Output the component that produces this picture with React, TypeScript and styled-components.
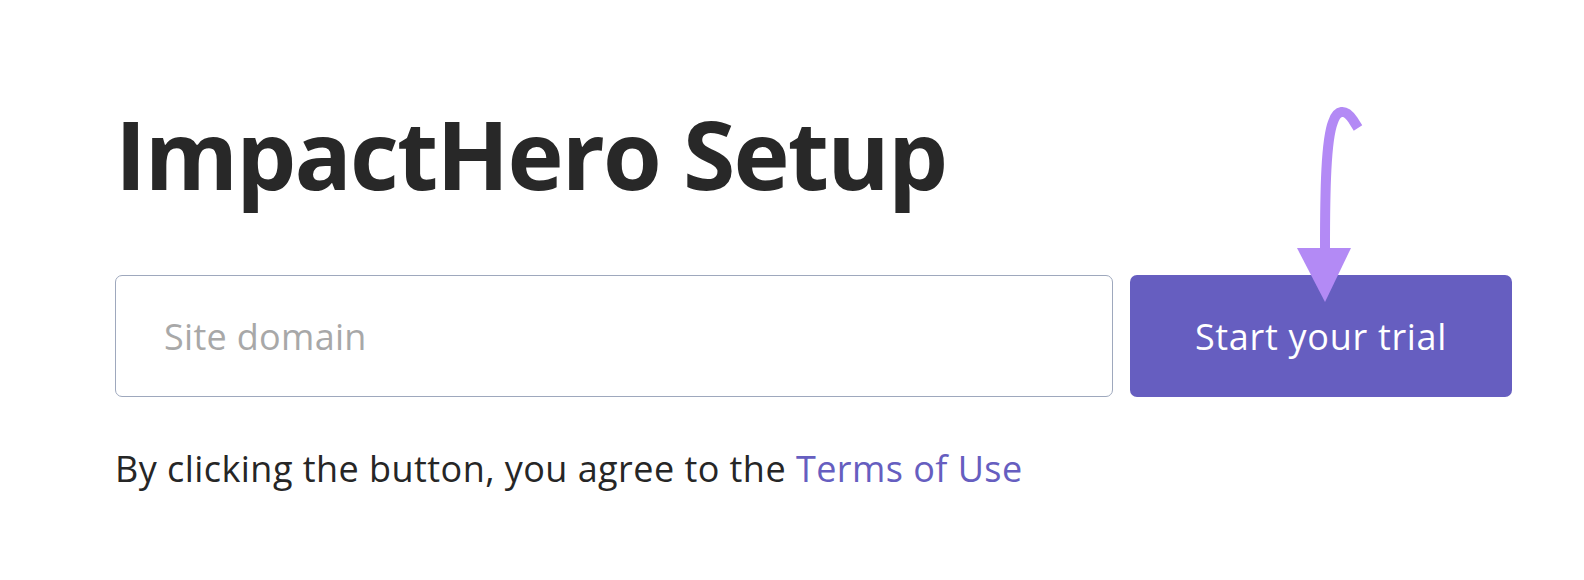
import React from "react";
import styled, { createGlobalStyle } from "styled-components";

const GlobalStyle = createGlobalStyle`
  html, body {
    margin: 0;
    padding: 0;
    background: #ffffff;
  }
  body {
    font-family: "Open Sans", "Noto Sans", sans-serif;
    color: #262626;
  }
`;

const Page = styled.main`
  width: 1584px;
  height: 580px;
  box-sizing: border-box;
  padding: 95px 0 0 115px;
  display: flex;
  flex-direction: column;
  overflow: hidden;
`;

const Title = styled.h1`
  margin: 0;
  font-family: "Open Sans", sans-serif;
  font-weight: 700;
  font-size: 95px;
  line-height: 116px;
  letter-spacing: -1.8px;
  color: #282828;
`;

const Form = styled.form`
  margin-top: 64px;
  display: flex;
  gap: 17px;
  position: relative;
`;

const DomainInput = styled.input`
  box-sizing: border-box;
  width: 998px;
  height: 122px;
  border: 1.5px solid #9ea8bd;
  border-radius: 7px;
  padding: 0 0 0 48px;
  font-family: "Open Sans", sans-serif;
  font-size: 36px;
  letter-spacing: 0.3px;
  color: #262626;
  outline: none;
  &::placeholder {
    color: #a8a8a8;
  }
`;

const TrialButton = styled.button`
  box-sizing: border-box;
  width: 382px;
  height: 122px;
  border: none;
  border-radius: 7px;
  background: #665ec0;
  color: #ffffff;
  font-family: "Open Sans", sans-serif;
  font-size: 36px;
  letter-spacing: 0.7px;
  cursor: pointer;
`;

const Arrow = styled.svg`
  position: absolute;
  left: 1170px;
  top: -175px;
  overflow: visible;
  pointer-events: none;
`;

const Agreement = styled.p`
  margin: 49px 0 0 0;
  font-family: "Open Sans", sans-serif;
  font-size: 36px;
  line-height: 46px;
  letter-spacing: 0.45px;
  color: #262626;
`;

const TermsLink = styled.a`
  color: #665ec0;
  text-decoration: none;
`;

export default function App() {
  return (
    <>
      <GlobalStyle />
      <Page>
        <Title>ImpactHero Setup</Title>
        <Form onSubmit={(e) => e.preventDefault()}>
          <DomainInput placeholder="Site domain" />
          <TrialButton type="submit">Start your trial</TrialButton>
          <Arrow width="80" height="200" viewBox="0 0 80 200">
            <path
              d="M40 148 C40 90 41 40 48 22 C52 10 60 8 68 20 L73 28"
              fill="none"
              stroke="#b38af5"
              strokeWidth="10"
            />
            <polygon points="12,148 66,148 40,202" fill="#b38af5" />
          </Arrow>
        </Form>
        <Agreement>
          By clicking the button, you agree to the <TermsLink href="#">Terms of Use</TermsLink>
        </Agreement>
      </Page>
    </>
  );
}
